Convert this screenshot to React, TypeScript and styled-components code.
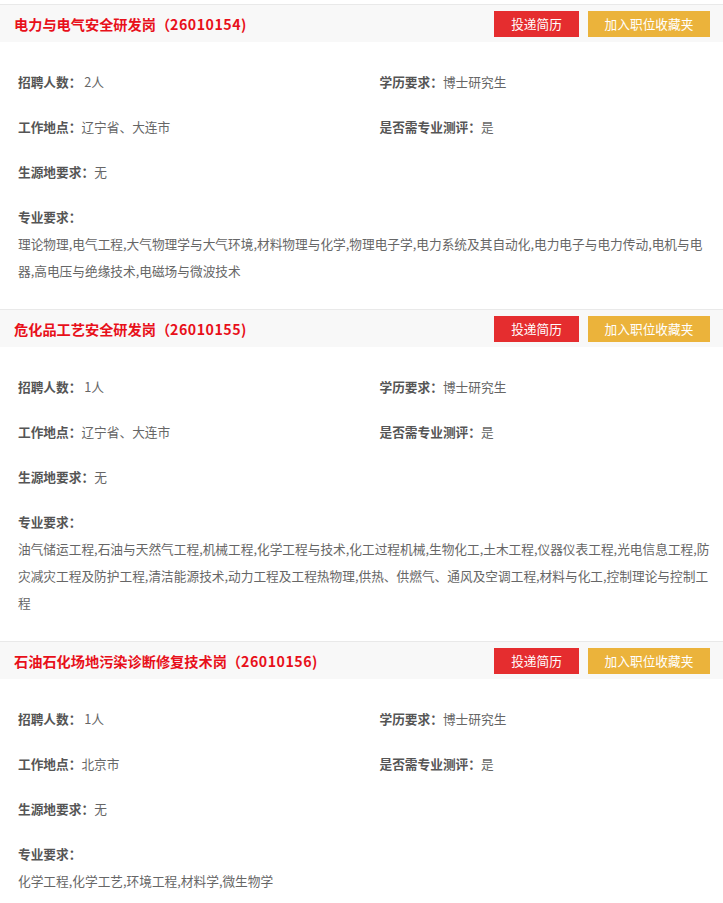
import React from "react";
import styled, { createGlobalStyle } from "styled-components";

const Global = createGlobalStyle`
  html, body { margin: 0; padding: 0; background: #fff; }
  body { font-family: "Noto Sans CJK SC", "Microsoft YaHei", sans-serif; }
`;

const Page = styled.div`
  padding-top: 4px;
  width: 723px;
`;

const Card = styled.section`
  border-top: 1px solid #e9e9e9;
`;

const Header = styled.div`
  height: 37px;
  background: #f8f8f8;
  display: flex;
  align-items: center;
  padding: 0 13px 0 14px;
`;

const Title = styled.h3`
  flex: 1;
  margin: 0;
  font-size: 14.2px;
  font-weight: 700;
  color: #e8101a;
  line-height: 20px;
  white-space: nowrap;
`;

const Code = styled.span`
  letter-spacing: 0.5px;
`;

const Btn = styled.button<{ $bg: string; $w: number }>`
  width: ${(p) => p.$w}px;
  height: 26px;
  margin-left: 9px;
  border: none;
  padding: 0;
  background: ${(p) => p.$bg};
  color: #fff;
  font-family: inherit;
  font-size: 12.7px;
  line-height: 26px;
  cursor: pointer;
`;

const Body = styled.div`
  padding: 26px 0 25px;
`;

const Grid = styled.div`
  display: grid;
  grid-template-columns: 1fr 1fr;
  row-gap: 18px;
`;

const Cell = styled.div<{ $full?: boolean }>`
  grid-column: ${(p) => (p.$full ? "1 / span 2" : "auto")};
  padding-left: 18px;
  font-size: 12.7px;
  line-height: 27px;
  color: #666;
  white-space: nowrap;
`;

const Label = styled.span`
  font-weight: 700;
  color: #555;
`;

const Major = styled.div`
  margin-top: 18px;
  padding: 0 9px 0 18px;
  font-size: 12.7px;
  line-height: 27px;
  color: #666;
`;

const MajorText = styled.div`
  word-break: break-all;
`;

type Job = {
  name: string;
  code: string;
  count: string;
  edu: string;
  place: string;
  test: string;
  origin: string;
  majors: string;
};

const jobs: Job[] = [
  {
    name: "电力与电气安全研发岗",
    code: "26010154",
    count: " 2人",
    edu: "博士研究生",
    place: "辽宁省、大连市",
    test: "是",
    origin: "无",
    majors:
      "理论物理,电气工程,大气物理学与大气环境,材料物理与化学,物理电子学,电力系统及其自动化,电力电子与电力传动,电机与电器,高电压与绝缘技术,电磁场与微波技术",
  },
  {
    name: "危化品工艺安全研发岗",
    code: "26010155",
    count: " 1人",
    edu: "博士研究生",
    place: "辽宁省、大连市",
    test: "是",
    origin: "无",
    majors:
      "油气储运工程,石油与天然气工程,机械工程,化学工程与技术,化工过程机械,生物化工,土木工程,仪器仪表工程,光电信息工程,防灾减灾工程及防护工程,清洁能源技术,动力工程及工程热物理,供热、供燃气、通风及空调工程,材料与化工,控制理论与控制工程",
  },
  {
    name: "石油石化场地污染诊断修复技术岗",
    code: "26010156",
    count: " 1人",
    edu: "博士研究生",
    place: "北京市",
    test: "是",
    origin: "无",
    majors: "化学工程,化学工艺,环境工程,材料学,微生物学",
  },
];

const JobCard: React.FC<{ job: Job }> = ({ job }) => (
  <Card>
    <Header>
      <Title>
        {job.name}（<Code>{job.code}</Code>)
      </Title>
      <Btn $bg="#e52d2f" $w={85}>投递简历</Btn>
      <Btn $bg="#ebb33b" $w={122}>加入职位收藏夹</Btn>
    </Header>
    <Body>
      <Grid>
        <Cell>
          <Label>招聘人数：</Label>
          {job.count}
        </Cell>
        <Cell>
          <Label>学历要求：</Label>
          {job.edu}
        </Cell>
        <Cell>
          <Label>工作地点：</Label>
          {job.place}
        </Cell>
        <Cell>
          <Label>是否需专业测评：</Label>
          {job.test}
        </Cell>
        <Cell $full>
          <Label>生源地要求：</Label>
          {job.origin}
        </Cell>
      </Grid>
      <Major>
        <Label>专业要求：</Label>
        <MajorText>{job.majors}</MajorText>
      </Major>
    </Body>
  </Card>
);

export default function App() {
  return (
    <Page>
      <Global />
      {jobs.map((j) => (
        <JobCard key={j.code} job={j} />
      ))}
    </Page>
  );
}
